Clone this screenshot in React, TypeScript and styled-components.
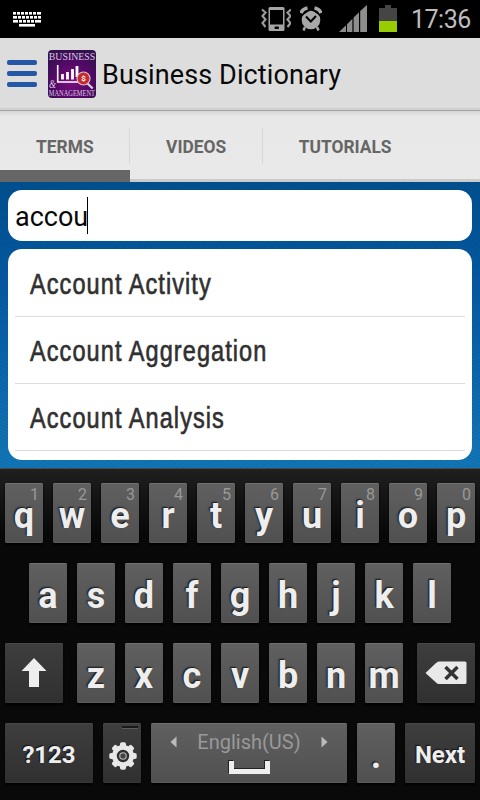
import React from "react";
import styled, { createGlobalStyle } from "styled-components";

const GlobalStyle = createGlobalStyle`
  body { margin: 0; background: #000; font-family: Roboto, sans-serif; }
  * { box-sizing: border-box; }
  svg { display: block; flex: none; }
`;

const Screen = styled.div`
  width: 480px;
  height: 800px;
  overflow: hidden;
  display: flex;
  flex-direction: column;
`;

const StatusBar = styled.header`
  height: 38px;
  flex: none;
  background: #000;
  display: flex;
  align-items: center;
  padding: 0 9px 0 13px;
`;

const StatusIcons = styled.div`
  display: flex;
  margin-left: auto;
`;

const StatusGap = styled.span<{ $size: number }>`
  width: ${(p) => p.$size}px;
`;

const Clock = styled.time`
  width: 61px;
  margin-left: 13px;
  margin-right: 0;
  font-size: 25px;
  line-height: 38px;
  letter-spacing: -0.5px;
  color: #bebebe;
  padding: 2px 0 0 1px;
  white-space: nowrap;
`;

const TitleBar = styled.div`
  height: 73px;
  flex: none;
  display: flex;
  align-items: center;
  padding: 0 0 1px 7px;
  background: #dddddd;
  border-bottom: 1px solid #a5a5a5;
  box-shadow: inset 0 -3px 1px -1px #d0d0d0;
`;

const MenuButton = styled.div`
  width: 30px;
  display: flex;
  flex-direction: column;
  gap: 6px;
  margin-right: 11px;
`;

const MenuLine = styled.span`
  height: 5px;
  border-radius: 2px;
  background: #2458a6;
`;

const Title = styled.h1`
  margin: 0 0 0 6px;
  font-size: 27px;
  font-weight: 400;
  line-height: 32px;
  letter-spacing: 0.12px;
  color: #080808;
  padding-top: 2px;
`;

const Tabs = styled.nav`
  height: 71px;
  flex: none;
  display: flex;
  background: linear-gradient(#d4d4d4, #e8e8e8 5px, #e9e9e9);
  box-shadow: inset 0 -3px 0 #cbcbcb;
`;

const Tab = styled.div<{ $width: number; $active?: boolean; $divided?: boolean }>`
  width: ${(p) => p.$width}px;
  height: 71px;
  text-align: center;
  font-size: 18px;
  font-weight: 700;
  line-height: 72px;
  color: #666;
  border-bottom: ${(p) => (p.$active ? "12px solid #666" : "0")};
  background: ${(p) =>
    p.$divided ? "linear-gradient(#d7d7d7, #d7d7d7) right 17px / 1px 36px no-repeat" : "none"};
`;

const TabLabel = styled.span`
  display: inline-block;
  transform: scaleX(0.965);
`;

const Content = styled.main`
  height: 286px;
  flex: none;
  padding: 8px 8px 0;
  display: flex;
  flex-direction: column;
  gap: 8px;
  background: repeating-linear-gradient(25deg, rgba(0, 30, 70, 0.09) 0 1px, transparent 1px 3px),
    linear-gradient(#00508f, #0459a0 35%, #1276b6);
`;

const SearchField = styled.div`
  height: 51px;
  flex: none;
  display: flex;
  align-items: center;
  padding-left: 7px;
  background: #fff;
  border-radius: 14px;
  font-size: 27px;
  color: #080808;
`;

const Query = styled.span`
  padding-top: 3px;
`;

const Caret = styled.span`
  width: 1px;
  height: 37px;
  background: #000;
  margin-left: -1px;
`;

const Results = styled.ul`
  height: 211px;
  flex: none;
  list-style: none;
  margin: 0;
  padding: 1px 7px 0;
  background: #fff;
  border-radius: 14px;
`;

const Result = styled.li`
  height: 67px;
  padding-left: 15px;
  border-bottom: 1px solid #dcdcdc;
  font: 400 29px/68px "Liberation Sans", sans-serif;
  color: #303030;
  -webkit-text-stroke: 0.65px #303030;
  white-space: nowrap;
`;

const Condensed = styled.span`
  display: inline-block;
  letter-spacing: 1.3px;
  transform: scaleX(0.812);
  transform-origin: left;
`;

const Keyboard = styled.section`
  flex: 1;
  padding: 14px 5px 0;
  display: flex;
  flex-direction: column;
  gap: 20px;
  border-top: 1px solid #484848;
  background: linear-gradient(#202020, #181818 18px, #080808 65px, #090909);
`;

const KeyRow = styled.div`
  height: 60px;
  display: flex;
  justify-content: center;
  gap: 10px;
`;

const KeyGroup = styled.div`
  display: flex;
  gap: 10px;
  margin: 0 4px;
`;

const Key = styled.div<{ $width?: number; $dark?: boolean }>`
  position: relative;
  width: ${(p) => p.$width ?? 38}px;
  height: 60px;
  flex: none;
  display: flex;
  align-items: center;
  justify-content: center;
  border-radius: 2px;
  background: ${(p) =>
    p.$dark ? "linear-gradient(#3e3e3e, #303030)" : "linear-gradient(#606060, #505050)"};
  box-shadow: inset 0 1px 0 ${(p) => (p.$dark ? "#484848" : "#707070")},
    inset 0 -1px 0 ${(p) => (p.$dark ? "#393939" : "#5b5b5b")}, 0 2px 2px #000;
`;

const Letter = styled.span`
  font-size: 36px;
  font-weight: 700;
  line-height: 26px;
  padding-top: 6px;
  color: #eee;
  text-shadow: -1px -1px 1px #222, -1px -1px 2px #333;
`;

const KeyWord = styled.span`
  font-size: 24px;
  font-weight: 700;
  color: #eee;
  padding-top: 4px;
  text-shadow: -1px -1px 1px #111;
`;

const Hint = styled.span`
  position: absolute;
  top: 3px;
  right: 4px;
  font-size: 16px;
  line-height: 17px;
  color: #999;
`;

const SpaceContent = styled.div`
  width: 158px;
  height: 60px;
  display: flex;
  flex-direction: column;
  align-items: center;
`;

const Language = styled.div`
  width: 100%;
  height: 37px;
  display: flex;
  align-items: center;
  justify-content: space-between;
  font-size: 20px;
  color: #999;
`;

const LongPressMark = styled.span`
  position: absolute;
  top: 3px;
  right: 3px;
  width: 16px;
  height: 3px;
  background: #5c5c5c;
  border-top: 2px solid #191919;
`;

const GearSlot = styled.span`
  padding: 5px 0 0 1px;
`;

function KeyboardIcon() {
  const rows: number[][] = [
    [0, 4, 8, 12, 16, 20, 24],
    [0, 5, 9, 13, 17, 21, 25],
    [0, 6, 10, 14, 18, 22],
  ];
  return (
    <svg width="29" height="15" viewBox="0 0 29 15" fill="#fff">
      {rows.map((row, y) =>
        row.map((x, i) => (
          <rect
            key={`${y}-${x}`}
            x={x}
            y={y * 4}
            width={i === row.length - 1 ? 28 - x : row[i + 1] - x - 1}
            height="2.6"
          />
        ))
      )}
      <rect x="6" y="12" width="16" height="2.6" />
    </svg>
  );
}

function VibrateIcon() {
  return (
    <svg width="30" height="26" viewBox="0 0 30 26">
      <rect x="7.5" y="2" width="16" height="24" rx="1.5" fill="#a5a5a5" />
      <rect x="9" y="5" width="13" height="14.5" fill="#000" />
      <rect x="13.5" y="21.5" width="4.5" height="2.5" rx="1" fill="#000" />
      <path
        d="M1 4.5L4.5 7.5L1.5 11L4.5 14.5L1.5 18L4.5 22M30 4.5L26.5 7.5L29.5 11L26.5 14.5L29.5 18L26.5 22"
        fill="none"
        stroke="#9a9a9a"
        strokeWidth="2.2"
      />
    </svg>
  );
}

function AlarmIcon() {
  return (
    <svg width="22" height="26" viewBox="0 0 22 26">
      <circle cx="11" cy="15" r="9.3" fill="#a8a8a8" />
      <path d="M5 22l-1.5 3.5M17 22l1.5 3.5" stroke="#a8a8a8" strokeWidth="2.5" />
      <path d="M0 10.5L9 4M22 10.5L13 4" stroke="#000" strokeWidth="3" />
      <path d="M1 8Q2.5 4 7.5 3M21 8Q19.5 4 14.5 3" fill="none" stroke="#a8a8a8" strokeWidth="3.6" />
      <path d="M6 11.5l4.8 5L16 11" fill="none" stroke="#000" strokeWidth="2" />
    </svg>
  );
}

function SignalIcon() {
  return (
    <svg width="28" height="28" viewBox="0 0 28 28">
      <path
        d="M0 27L7 20.2V27ZM8 19.2L13.4 13.8V27H8ZM14.6 12.6L20 7.2V27H14.6ZM21.2 6L28 0V27H21.2Z"
        fill="#8d8d8d"
      />
    </svg>
  );
}

function BatteryIcon() {
  return (
    <svg width="18" height="28" viewBox="0 0 18 28">
      <path d="M0 3H6V0H12V3H18V27H0Z" fill="#454545" />
      <path d="M0 16H18V27H0Z" fill="#99cc00" />
    </svg>
  );
}

function AppLogo() {
  return (
    <svg width="48" height="48" viewBox="0 0 48 48">
      <defs>
        <radialGradient id="purple" cx="50%" cy="65%" r="65%">
          <stop offset="0" stopColor="#79107b" />
          <stop offset="0.55" stopColor="#560969" />
          <stop offset="1" stopColor="#35104f" />
        </radialGradient>
      </defs>
      <rect width="48" height="48" rx="4" fill="url(#purple)" />
      <g fill="#dcc6e4" fontFamily="Liberation Serif, serif">
        <text x="0.8" y="10.4" fontSize="11" textLength="46.4" lengthAdjust="spacingAndGlyphs">BUSINESS</text>
        <text x="0.8" y="45.8" fontSize="7.4" textLength="46.2" lengthAdjust="spacingAndGlyphs">MANAGEMENT</text>
        <text x="1" y="37.8" fontSize="13" fontStyle="italic" textLength="7" lengthAdjust="spacingAndGlyphs">&amp;</text>
      </g>
      <path d="M9.7 15V32H32" fill="none" stroke="#fff" strokeWidth="1.6" />
      <path d="M14.5 29.5V24M19.5 29.5V22M24.5 29.5V19M29 27V16" stroke="#fff" strokeWidth="2.8" />
      <path d="M39 33L44.7 38.5" stroke="#e2cce4" strokeWidth="2.2" />
      <circle cx="35.5" cy="28.5" r="6.5" fill="#c52b2b" stroke="#d9bfd3" strokeWidth="1.2" />
      <text x="35.5" y="31.3" fill="#fff" fontSize="8" fontWeight="700" textAnchor="middle">$</text>
    </svg>
  );
}

function ShiftIcon() {
  return (
    <svg width="26" height="30" viewBox="0 0 26 30">
      <path d="M13 0L25.5 13H18V29H8V13H.5Z" fill="#eee" />
    </svg>
  );
}

function BackspaceIcon() {
  return (
    <svg width="42" height="24" viewBox="0 0 42 24">
      <path
        d="M.5 12L11 2Q12.5 .5 14 .5H40Q41.5.5 41.5 2V21.5Q41.5 23 40 23H14Q12.5 23 11 21.5Z"
        fill="#e9e9e9"
      />
      <path d="M20.5 6L32.5 18M32.5 6L20.5 18" stroke="#333" strokeWidth="3.5" />
    </svg>
  );
}

function GearIcon() {
  return (
    <svg width="28" height="28" viewBox="-14 -14 28 28">
      <g fill="#e8e8e8">
        {Array.from({ length: 8 }, (_, i) => (
          <rect key={i} x="-3" y="-13.7" width="6" height="7" rx="1.8" transform={`rotate(${i * 45})`} />
        ))}
        <circle r="11" />
      </g>
      <circle r="5" fill="#bbb" stroke="#303030" strokeWidth="2.4" />
      <circle r="2.7" fill="#444" />
    </svg>
  );
}

const ArrowIcon = ({ right = false }: { right?: boolean }) => (
  <svg width="7" height="12" viewBox="0 0 7 12">
    <path d={right ? "M.5 .5L6.5 6L.5 11.5Z" : "M6.5 .5L.5 6L6.5 11.5Z"} fill="#bbb" />
  </svg>
);

const letterKeys = (letters: string, hints = "") =>
  letters.split("").map((letter, i) => (
    <Key key={letter}>
      {hints && <Hint>{hints[i]}</Hint>}
      <Letter>{letter}</Letter>
    </Key>
  ));

export default function App() {
  return (
    <Screen>
      <GlobalStyle />
      <StatusBar>
        <KeyboardIcon />
        <StatusIcons>
          <VibrateIcon />
          <StatusGap $size={9} />
          <AlarmIcon />
          <StatusGap $size={17} />
          <SignalIcon />
          <StatusGap $size={12} />
          <BatteryIcon />
        </StatusIcons>
        <Clock>17:36</Clock>
      </StatusBar>
      <TitleBar>
        <MenuButton>
          <MenuLine />
          <MenuLine />
          <MenuLine />
        </MenuButton>
        <AppLogo />
        <Title>Business Dictionary</Title>
      </TitleBar>
      <Tabs>
        <Tab $width={130} $active $divided><TabLabel>TERMS</TabLabel></Tab>
        <Tab $width={133} $divided><TabLabel>VIDEOS</TabLabel></Tab>
        <Tab $width={164}><TabLabel>TUTORIALS</TabLabel></Tab>
      </Tabs>
      <Content>
        <SearchField>
          <Query>accou</Query>
          <Caret />
        </SearchField>
        <Results>
          {["Account Activity", "Account Aggregation", "Account Analysis"].map((term) => (
            <Result key={term}><Condensed>{term}</Condensed></Result>
          ))}
        </Results>
      </Content>
      <Keyboard>
        <KeyRow>{letterKeys("qwertyuiop", "1234567890")}</KeyRow>
        <KeyRow>{letterKeys("asdfghjkl")}</KeyRow>
        <KeyRow>
          <Key $width={58} $dark><ShiftIcon /></Key>
          <KeyGroup>{letterKeys("zxcvbnm")}</KeyGroup>
          <Key $width={58} $dark><BackspaceIcon /></Key>
        </KeyRow>
        <KeyRow>
          <Key $width={88} $dark><KeyWord>?123</KeyWord></Key>
          <Key $dark><LongPressMark /><GearSlot><GearIcon /></GearSlot></Key>
          <Key $width={196}>
            <SpaceContent>
              <Language><ArrowIcon /><span>English(US)</span><ArrowIcon right /></Language>
              <svg width="42" height="14" viewBox="0 0 42 14">
                <path d="M0 13V0H5V8H36V0H41V13Z" fill="#222" />
                <path d="M1 14V1H6V9H37V1H42V14Z" fill="#eee" />
              </svg>
            </SpaceContent>
          </Key>
          <Key><Letter>.</Letter></Key>
          <Key $width={70} $dark><KeyWord>Next</KeyWord></Key>
        </KeyRow>
      </Keyboard>
    </Screen>
  );
}
